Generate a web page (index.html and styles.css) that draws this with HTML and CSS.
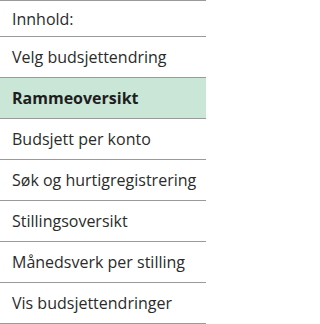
FILE: index.html
```html
<!DOCTYPE html>
<html lang="no">
<head>
<meta charset="utf-8">
<link rel="stylesheet" href="styles.css">
</head>
<body>
<nav class="toc">
  <div class="toc-head">Innhold:</div>
  <ul class="toc-list">
    <li class="toc-item">Velg budsjettendring</li>
    <li class="toc-item active">Rammeoversikt</li>
    <li class="toc-item">Budsjett per konto</li>
    <li class="toc-item">Søk og hurtigregistrering</li>
    <li class="toc-item">Stillingsoversikt</li>
    <li class="toc-item">Månedsverk per stilling</li>
    <li class="toc-item">Vis budsjettendringer</li>
  </ul>
</nav>
</body>
</html>
```
FILE: styles.css
```css
html, body {
  margin: 0;
  padding: 0;
  background: #fff;
}
body {
  font-family: "Open Sans", "Liberation Sans", sans-serif;
  font-size: 16px;
  color: #2b2b2b;
}
.toc {
  width: 206px;
  border-top: 1px solid #9a9a9a;
}
.toc-head {
  height: 35px;
  display: flex;
  align-items: center;
  padding-left: 12px;
  border-bottom: 1px solid #9a9a9a;
}
.toc-list {
  list-style: none;
  margin: 0;
  padding: 0;
}
.toc-item {
  height: 40px;
  display: flex;
  align-items: center;
  padding-left: 12px;
  border-bottom: 1px solid #9a9a9a;
  white-space: nowrap;
  overflow: hidden;
}
.toc-item.active {
  background: #c9e6d6;
  font-weight: 700;
  color: #1e1e1e;
}
```
